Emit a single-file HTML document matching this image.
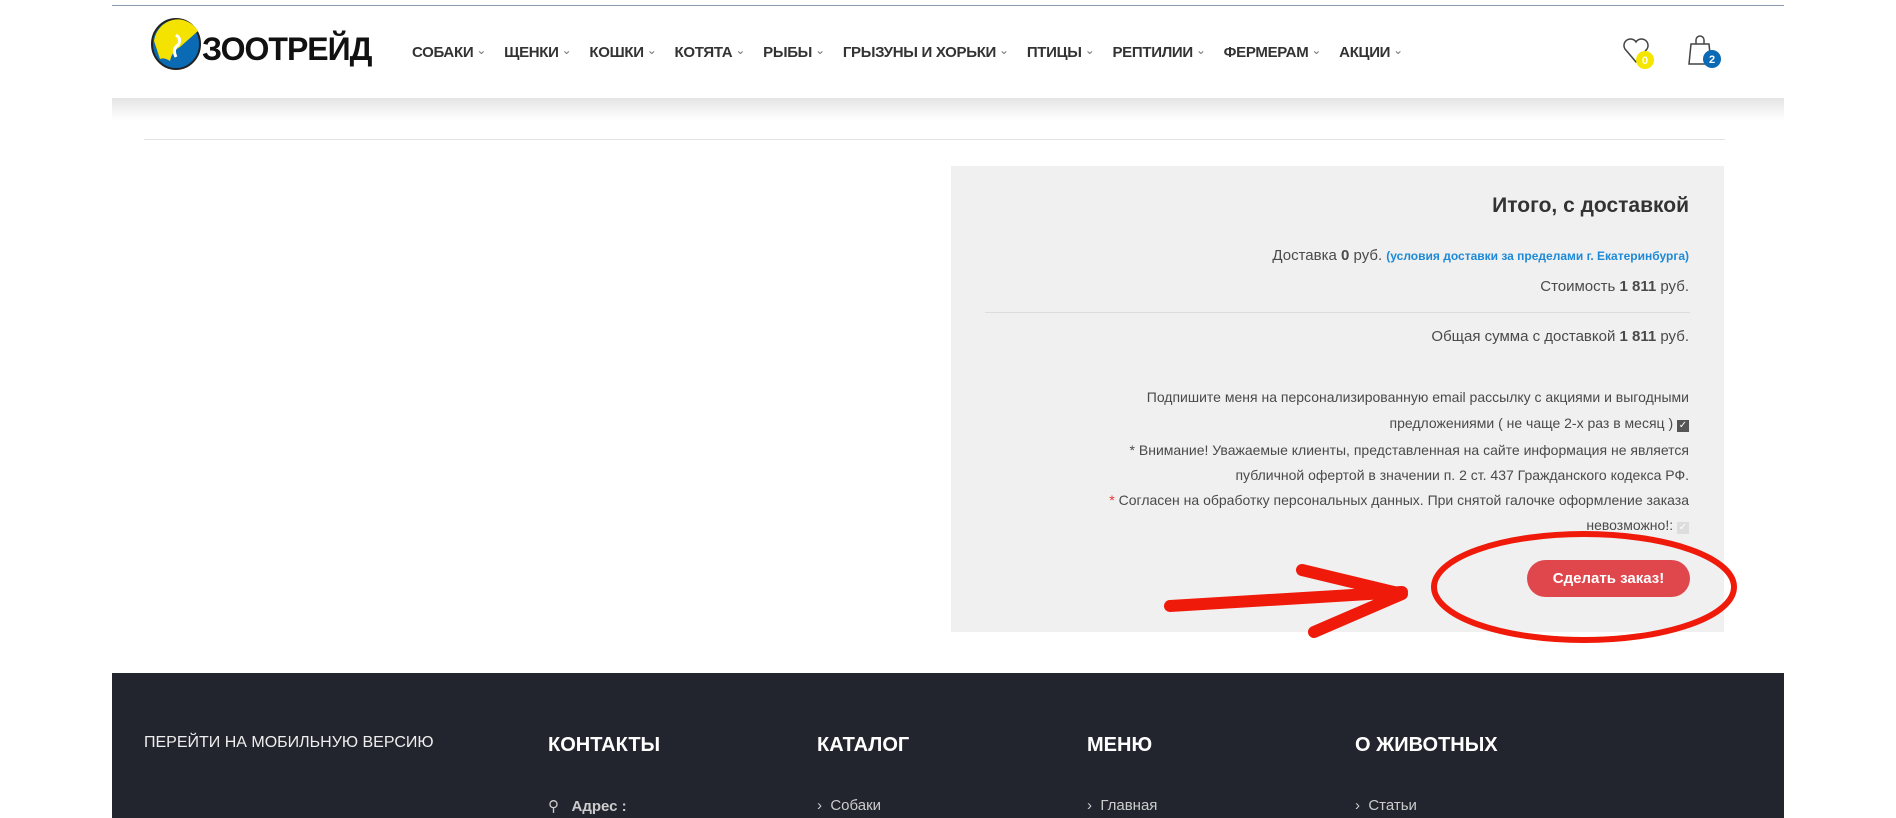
<!DOCTYPE html>
<html><head><meta charset="utf-8"><style>
body{margin:0;width:1896px;height:818px;position:relative;background:#fff;font-family:"Liberation Sans",sans-serif;overflow:hidden;color:#444}
.a{position:absolute;white-space:nowrap}
.r{position:absolute;right:207px;text-align:right;white-space:nowrap;font-size:14px;color:#4a4a4a}
nav span{font-size:15px;color:#333;font-weight:bold;margin-right:18px;letter-spacing:-0.3px}
nav span:after{content:"⌄";font-weight:normal;font-size:12px;color:#777;margin-left:3px;position:relative;top:-3px}
.fh{position:absolute;top:734px;color:#fff;font-weight:bold;font-size:20px}
.fi{position:absolute;top:797px;color:#ccc;font-size:15px}
</style></head><body>
<div class="a" style="left:112px;top:5px;width:1672px;height:1px;background:#8a99ad"></div>
<div class="a" style="left:112px;top:98px;width:1672px;height:22px;background:linear-gradient(#e4e4e4,#fff)"></div>
<svg class="a" style="left:150px;top:17px" width="230" height="55">
<ellipse cx="26" cy="27" rx="24" ry="25" fill="#0a6ab4" stroke="#222" stroke-width="2"/>
<path d="M4,24 A24,25 0 0 1 48,14 L30,30 Q22,34 20,44 Q14,40 10,42 Z" fill="#f4e200"/>
<path d="M26,18 q6,4 2,10 q-6,4 -2,12" stroke="#fff" stroke-width="3" fill="none"/>
<text x="52" y="43" font-family="Liberation Sans" font-weight="bold" font-size="32" fill="#111" letter-spacing="-1">ЗООТРЕЙД</text>
</svg>
<nav class="a" style="left:412px;top:44px"><span>СОБАКИ</span><span>ЩЕНКИ</span><span>КОШКИ</span><span>КОТЯТА</span><span>РЫБЫ</span><span>ГРЫЗУНЫ И ХОРЬКИ</span><span>ПТИЦЫ</span><span>РЕПТИЛИИ</span><span>ФЕРМЕРАМ</span><span>АКЦИИ</span></nav>
<svg class="a" style="left:1620px;top:34px" width="110" height="40">
<path d="M16,28 L5,15 A6,6 0 0 1 16,8 A6,6 0 0 1 27,15 Z" fill="none" stroke="#444" stroke-width="1.5"/>
<circle cx="25" cy="26" r="9" fill="#f5e600"/><text x="25" y="30" text-anchor="middle" font-size="11" font-weight="bold" fill="#fff">0</text>
<path d="M71,10 h18 l2,20 h-22 z M76,10 v-4 a4,4 0 0 1 8,0 v4" fill="none" stroke="#444" stroke-width="1.5"/>
<circle cx="92" cy="25" r="9" fill="#0a6ab4"/><text x="92" y="29" text-anchor="middle" font-size="11" font-weight="bold" fill="#fff">2</text>
</svg>
<div class="a" style="left:144px;top:139px;width:1581px;height:1px;background:#e3e3e3"></div>
<div class="a" style="left:951px;top:166px;width:773px;height:466px;background:#f0f0f0"></div>
<div class="r" style="top:194px;font-size:21px;font-weight:bold;color:#333">Итого, с доставкой</div>
<div class="r" style="top:247px;font-size:15px">Доставка <b>0</b> руб. <span style="color:#1d8ad8;font-size:12px;font-weight:bold">(условия доставки за пределами г. Екатеринбурга)</span></div>
<div class="r" style="top:278px;font-size:15px">Стоимость <b>1 811</b> руб.</div>
<div class="a" style="left:985px;top:312px;width:705px;height:1px;background:#ddd"></div>
<div class="r" style="top:328px;font-size:15px">Общая сумма с доставкой <b>1 811</b> руб.</div>
<div class="r" style="top:384px;line-height:26px">Подпишите меня на персонализированную email рассылку с акциями и выгодными<br>предложениями ( не чаще 2-х раз в месяц ) <span style="display:inline-block;width:12px;height:12px;background:#555;color:#fff;font-size:10px;line-height:12px;text-align:center">✓</span></div>
<div class="r" style="top:438px;line-height:25px">* Внимание! Уважаемые клиенты, представленная на сайте информация не является<br>публичной офертой в значении п. 2 ст. 437 Гражданского кодекса РФ.<br><span style="color:#e33">*</span> Согласен на обработку персональных данных. При снятой галочке оформление заказа<br>невозможно!: <span style="display:inline-block;width:12px;height:12px;background:#ddd;color:#fff;font-size:10px;line-height:12px;text-align:center">✓</span></div>
<div class="a" style="left:1527px;top:560px;width:163px;height:37px;border-radius:19px;background:#e0474c;color:#fff;font-weight:bold;font-size:15px;line-height:37px;text-align:center">Сделать заказ!</div>
<svg class="a" style="left:0;top:0" width="1896" height="818">
<ellipse cx="1584" cy="587" rx="150" ry="53" fill="none" stroke="#f01a0a" stroke-width="6"/>
<path d="M1170,606 L1402,592 M1302,570 L1402,594 L1314,632" fill="none" stroke="#f01a0a" stroke-width="12" stroke-linecap="round" stroke-linejoin="round"/>
</svg>
<div class="a" style="left:112px;top:673px;width:1672px;height:145px;background:#23252e"></div>
<div class="a" style="left:144px;top:734px;color:#eee;font-size:16px">ПЕРЕЙТИ НА МОБИЛЬНУЮ ВЕРСИЮ</div>
<div class="fh" style="left:548px">КОНТАКТЫ</div>
<div class="fh" style="left:817px">КАТАЛОГ</div>
<div class="fh" style="left:1087px">МЕНЮ</div>
<div class="fh" style="left:1355px">О ЖИВОТНЫХ</div>
<div class="fi" style="left:548px">⚲&nbsp;&nbsp; <b>Адрес :</b></div>
<div class="fi" style="left:817px">›&nbsp; Собаки</div>
<div class="fi" style="left:1087px">›&nbsp; Главная</div>
<div class="fi" style="left:1355px">›&nbsp; Статьи</div>
</body></html>
